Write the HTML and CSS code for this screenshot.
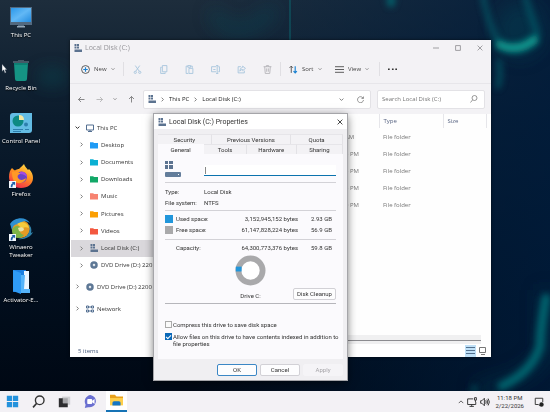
FILE: index.html
```html
<!DOCTYPE html>
<html lang="en">
<head>
<meta charset="utf-8">
<title>Desktop</title>
<link rel="stylesheet" href="styles.css">
</head>
<body>
<svg class="defs" aria-hidden="true">
  <symbol id="drive" viewBox="0 0 16 16"><path fill="#5c7390" d="M1 0h4v4H1zM6 0h4v4H6zM1 5h4v4H1zM6 5h4v4H6zM1 11h15v5H1z"/></symbol>
  <symbol id="folder" viewBox="0 0 16 14"><path fill="currentColor" d="M0 1h6l2 2h8v11H0z"/><path fill="#fff" opacity=".25" d="M0 1h6l2 2H0z"/></symbol>
  <symbol id="right" viewBox="0 0 8 8"><path class="line" d="M2.5 1 5.5 4l-3 3"/></symbol>
  <symbol id="down" viewBox="0 0 8 8"><path class="line" d="M1 2.5 4 5.5l3-3"/></symbol>
  <symbol id="disc" viewBox="0 0 16 16"><circle cx="8" cy="8" r="5" fill="none" stroke="#5d7795" stroke-width="5"/><circle cx="8" cy="8" r="1" fill="#5d7795"/></symbol>
  <symbol id="close" viewBox="0 0 10 10"><path class="line" d="m1 1 8 8M9 1 1 9"/></symbol>
  <symbol id="shortcut" viewBox="0 0 8 8"><path fill="#f4f8fc" d="M0 0h8v8H0z"/><path fill="#1d5fa8" d="M3 1h4v4L5.600 3.700C4.300 4.500 3.800 5.500 4 7H2C1.800 4.800 2.600 3.300 4.300 2.400z"/></symbol>
</svg>

<main class="desktop">
  <svg class="wallpaper" viewBox="0 0 550 391" preserveAspectRatio="none" aria-hidden="true">
    <defs>
      <linearGradient id="sky" x1="0" y1="0" x2="0" y2="1"><stop offset="0" stop-color="#1d2d3c"/><stop offset=".3" stop-color="#0b1c2d"/><stop offset=".65" stop-color="#021020"/><stop offset="1" stop-color="#000814"/></linearGradient>
      <linearGradient id="sea" x1="0" y1="0" x2="1" y2="0"><stop offset=".35" stop-color="#001f3f" stop-opacity="0"/><stop offset="1" stop-color="#001c3c" stop-opacity=".8"/></linearGradient>
      <filter id="soft" x="-50%" y="-50%" width="200%" height="200%"><feGaussianBlur stdDeviation="3"/></filter>
      <filter id="haze" x="-80%" y="-80%" width="260%" height="260%"><feGaussianBlur stdDeviation="9"/></filter>
    </defs>
    <path fill="url(#sky)" d="M0 0h550v391H0z"/>
    <path fill="url(#sea)" d="M0 0h550v391H0z"/>
    <g fill="none" filter="url(#haze)">
      <ellipse cx="52" cy="77" rx="14" ry="6" fill="#0a6a70" opacity=".45"/>
      <ellipse cx="520" cy="30" rx="24" ry="28" fill="#075a66" opacity=".25"/>
      <path stroke="#0b5c68" stroke-width="9" opacity=".4" d="M212 12q22 36 62-2"/>
      <path stroke="#03455a" stroke-width="12" opacity=".4" d="M545 290v60q-10 28-70 40"/>
    </g>
    <g fill="none" filter="url(#soft)" stroke-linecap="round">
      <path stroke="#0a7a80" stroke-width="6" opacity=".45" d="M483-4q6 32 16 46M525-4q6 20 12 38"/>
      <path stroke="#0ba497" stroke-width="9" opacity=".9" d="M500 45q18 8 34-5"/>
      <path stroke="#087278" stroke-width="8" opacity=".75" d="M391-2v5"/>
      <path stroke="#087278" stroke-width="6" opacity=".5" d="M499 62q2 16-1 24"/>
      <path stroke="#067f83" stroke-width="9" opacity=".7" d="M546 298q-6 32-6 48-8 26-38 40"/>
      <path stroke="#067f83" stroke-width="6" opacity=".4" d="M474 388v2"/>
    </g>
    <path stroke="#0a7f84" opacity=".7" d="M290 0v40"/>
  </svg>

  <nav class="shortcuts" aria-label="Desktop">
    <a class="shortcut" href="#"><svg viewBox="0 0 24 24"><defs><linearGradient id="pc" x1="0" y1="0" x2="1" y2="1"><stop offset="0" stop-color="#2b98ea"/><stop offset=".5" stop-color="#62b8f5"/><stop offset="1" stop-color="#238ce0"/></linearGradient></defs><path fill="#52697f" d="M1 2h22v18H1zM9 20h6v2H9z"/><path fill="url(#pc)" d="M2 3h20v14H2z"/><path fill="#94a7b7" d="M8 21h8v1.500H8z"/></svg>This PC</a>
    <a class="shortcut" href="#"><svg viewBox="0 0 24 24"><path fill="#159484" d="M5 5h14l-1 16q0 2-2 2H8q-2 0-2-2z"/><path fill="#0d7f73" d="M5 5h14v2H5z"/><path fill="#455966" d="M4 3h5V2h6v1h5v2H4z"/></svg>Recycle Bin</a>
    <a class="shortcut" href="#"><svg viewBox="0 0 24 24"><path fill="#63bce4" d="M4 2h19v17q0 3-3 3H1V5q0-3 3-3z"/><circle cx="9" cy="10" r="5.500" fill="#0d8a83"/><path fill="#f4e7a1" d="M10 9V4q5 0 5 5z"/><path stroke="#2d7fae" d="M4 18.500h10M16 18.500h4M4 20.500h8"/><circle cx="17" cy="13.500" r="2" fill="#2d7fae"/></svg>Control Panel</a>
    <a class="shortcut" href="#"><svg viewBox="0 0 24 24"><defs><linearGradient id="fox" x1=".8" y1="0" x2=".3" y2="1"><stop offset="0" stop-color="#ffe04a"/><stop offset=".45" stop-color="#ff9320"/><stop offset="1" stop-color="#f0284f"/></linearGradient></defs><path fill="url(#fox)" d="M3 4c1 1 2 2 3 2.500 1-1 3-1.500 4-1.500C12 3 14 1 15 0c1 3 3 4 4 6l1-1c3 3 4 6 4 9 0 6-5 10-12 10S0 19 0 13c0-4 1-7 3-9z"/><circle cx="12.500" cy="13" r="5.500" fill="#6a43c9"/><path fill="#ff9a26" d="M3 8c3-1 7 0 9 2-3 0-4 2-3 4 2 3 6 2 8 0-1 5-8 7-12 3-2-3-2-6-2-9z"/><path fill="#a34ce0" d="M11 8c3-1 7 1 7 5-2-2-4-3-7-3z"/><use href="#shortcut" x="0" y="17" width="7" height="7"/></svg>Firefox</a>
    <a class="shortcut" href="#"><svg viewBox="0 0 24 24"><circle cx="12" cy="12" r="9" fill="#e59b24"/><path fill="#2f8fd0" d="M1 7C5 0 17-1 21 6c-5-3-9-2-11 2-3-2-6 0-7 5-1-2-1-4-2-6z"/><path fill="#7db347" d="M3 13c2-4 5-5 8-3-1 4 0 7 4 8-2 3-7 4-9 2-2-1-3-4-3-7z"/><path fill="#f6cb3d" d="M8 7c5-4 11-1 12 4-3-1-5-1-7 1-1-2-3-3-5-5z"/><path fill="#e9e3a9" d="M9 11c2-1 5-1 6 1 0 2-3 3-5 2z"/><path fill="#3083ab" d="M24 15c-2 5-9 8-15 7 5-1 9-2 11-7 1-3 1-5-1-8 3 2 4 5 3 9z"/><use href="#shortcut" x="0" y="17" width="7" height="7"/></svg>Winaero<br>Tweaker</a>
    <a class="shortcut" href="#"><svg viewBox="0 0 24 24"><path fill="#1b7fe0" d="M4 0h13v22H4z"/><path fill="#eaf5ff" d="M15 1h5v19h-5z"/><path fill="#2f9bf5" d="M4 0 12 3v21l-8-3z"/><path fill="#55b4fa" d="M12 5h4l-1 14h6v4h-9z"/></svg>Activator-E...</a>
  </nav>

  <section class="explorer" aria-label="File Explorer">
    <header class="titlebar">
      <svg class="i8"><use href="#drive"/></svg><span class="name">Local Disk (C:)</span>
      <button aria-label="Minimize"><svg class="i6" viewBox="0 0 10 10"><path class="line" d="M0 5h10"/></svg></button>
      <button aria-label="Maximize"><svg class="i6" viewBox="0 0 10 10"><path class="line" d="M1 1h8v8H1z"/></svg></button>
      <button aria-label="Close"><svg class="i6"><use href="#close"/></svg></button>
    </header>
    <div class="toolbar">
      <button class="new"><svg class="i9" viewBox="0 0 16 16"><circle class="line" cx="8" cy="8" r="7"/><path stroke="#1a82d2" stroke-width="2" d="M8 4v8M4 8h8"/></svg>New<svg class="i4"><use href="#down"/></svg></button>
      <div class="tools">
        <button aria-label="Cut"><svg class="i9" viewBox="0 0 16 16"><path class="line" d="m4 1 7 10M12 1 5 11"/><circle class="line" cx="4" cy="13" r="2"/><circle class="line" cx="12" cy="13" r="2"/></svg></button>
        <button aria-label="Copy"><svg class="i9" viewBox="0 0 16 16"><path class="line" d="M6 1h8v11H6zM5 4H3v11h8v-2"/></svg></button>
        <button aria-label="Paste"><svg class="i9" viewBox="0 0 16 16"><path class="line" d="M5 2H2v13h4M5 1h5v3H5zM10 2h3v3M7 6h7v9H7z"/></svg></button>
        <button aria-label="Rename"><svg class="i9" viewBox="0 0 16 16"><path class="line" d="M9 3H1v9h8M13 3h2v9h-2M11 1v14M9 1h4M9 15h4M4 8h4"/></svg></button>
        <button aria-label="Share"><svg class="i9" viewBox="0 0 16 16"><path class="line" d="M7 3H2v11h11v-4M10 2l5 4-5 4V8q-4 0-5 3 0-6 5-7z"/></svg></button>
        <button class="gray" aria-label="Delete"><svg class="i9" viewBox="0 0 16 16"><path class="line" d="M1 3h14M6 3V1h4v2M3 3l1 12h8l1-12M6.500 6v6M9.500 6v6"/></svg></button>
      </div>
      <button class="sort"><svg class="i9" viewBox="0 0 16 16"><path class="line" d="M4 14V2M1 5l3-3 3 3"/><path fill="none" stroke="#1a82d2" stroke-width="2" d="M11 2v12M8 11l3 3 3-3"/></svg>Sort<svg class="i4"><use href="#down"/></svg></button>
      <button class="view"><svg class="i9" viewBox="0 0 16 16"><path class="line" d="M0 3h16M0 8h16M0 13h16"/></svg>View<svg class="i4"><use href="#down"/></svg></button>
      <button class="more" aria-label="See more"><svg class="i9" viewBox="0 0 16 16"><path fill="#333" d="M0 6h3v3H0zM7 6h3v3H7zM13 6h3v3h-3z"/></svg></button>
    </div>
    <div class="location">
      <div class="history">
        <button aria-label="Back"><svg class="i7" viewBox="0 0 14 14"><path class="line" d="M13 7H1M6 2 1 7l5 5"/></svg></button>
        <button class="dim" aria-label="Forward"><svg class="i7" viewBox="0 0 14 14"><path class="line" d="M1 7h12M8 2l5 5-5 5"/></svg></button>
        <button aria-label="Recent locations"><svg class="i4"><use href="#down"/></svg></button>
        <button aria-label="Up"><svg class="i7" viewBox="0 0 14 14"><path class="line" d="M7 13V1M2 6l5-5 5 5"/></svg></button>
      </div>
      <div class="address">
        <svg class="i8"><use href="#drive"/></svg>
        <svg class="i5"><use href="#right"/></svg><a href="#">This PC</a>
        <svg class="i5"><use href="#right"/></svg><a href="#">Local Disk (C:)</a>
        <button class="push" aria-label="Previous locations"><svg class="i5"><use href="#down"/></svg></button>
        <button aria-label="Refresh"><svg class="i7" viewBox="0 0 14 14"><path class="line" d="M12 4A6 6 0 1 0 13 8M13 1v4H9"/></svg></button>
      </div>
      <label class="search"><input type="search" placeholder="Search Local Disk (C:)" aria-label="Search Local Disk (C:)"><svg class="i8" viewBox="0 0 16 16"><circle class="line" cx="9" cy="6" r="5"/><path class="line" d="m5 10-4 5"/></svg></label>
    </div>
    <div class="content">
      <aside class="tree">
        <div class="rows">
          <a class="row root" href="#"><svg class="i5 open"><use href="#down"/></svg><svg class="i8" viewBox="0 0 16 16"><path fill="none" stroke="#536f91" stroke-width="2" d="M1 2h14v10H1zM4 15h8M8 12v3"/></svg>This PC</a>
          <a class="row" href="#"><svg class="i5"><use href="#right"/></svg><svg class="i8 blue"><use href="#folder"/></svg>Desktop</a>
          <a class="row" href="#"><svg class="i5"><use href="#right"/></svg><svg class="i8 cyan"><use href="#folder"/></svg>Documents</a>
          <a class="row" href="#"><svg class="i5"><use href="#right"/></svg><svg class="i8 green"><use href="#folder"/></svg>Downloads</a>
          <a class="row" href="#"><svg class="i5"><use href="#right"/></svg><svg class="i8 coral"><use href="#folder"/></svg>Music</a>
          <a class="row" href="#"><svg class="i5"><use href="#right"/></svg><svg class="i8 amber"><use href="#folder"/></svg>Pictures</a>
          <a class="row" href="#"><svg class="i5"><use href="#right"/></svg><svg class="i8 red"><use href="#folder"/></svg>Videos</a>
          <a class="row current" href="#"><svg class="i5"><use href="#right"/></svg><svg class="i8"><use href="#drive"/></svg>Local Disk (C:)</a>
          <a class="row" href="#"><svg class="i5"><use href="#right"/></svg><svg class="i8"><use href="#disc"/></svg>DVD Drive (D:) 220</a>
        </div>
        <a class="row root" href="#"><svg class="i5"><use href="#right"/></svg><svg class="i8"><use href="#disc"/></svg>DVD Drive (D:) 2200</a>
        <a class="row root" href="#"><svg class="i5"><use href="#right"/></svg><svg class="i8" viewBox="0 0 16 16"><path fill="none" stroke="#536f91" stroke-width="2" d="M1 2h4v4H1zM11 2h4v4h-4zM1 10h4v4H1zM11 10h4v4h-4zM5 4h6M5 12h6"/></svg>Network</a>
      </aside>
      <div class="files">
        <table>
          <thead><tr><th class="date" aria-label="Date"></th><th class="type">Type</th><th class="size">Size</th></tr></thead>
          <tbody>
            <tr><td class="date">AM</td><td>File folder</td><td></td></tr>
            <tr><td class="date">3 PM</td><td>File folder</td><td></td></tr>
            <tr><td class="date">3 PM</td><td>File folder</td><td></td></tr>
            <tr><td class="date">3 PM</td><td>File folder</td><td></td></tr>
            <tr><td class="date">0 PM</td><td>File folder</td><td></td></tr>
          </tbody>
        </table>
        <div class="scroll"></div>
      </div>
    </div>
    <footer class="status">
      <span class="name">5 items</span>
      <button class="on" aria-label="Details"><svg class="i9" viewBox="0 0 9 9"><path stroke="#53708d" d="M0 1.500h9M0 4.500h9M0 7.500h9"/></svg></button>
      <button aria-label="Large icons"><svg class="i9" viewBox="0 0 9 9"><path fill="none" stroke="#777" d="M1.500 1.500h6v5h-6zM3 8.500h4"/></svg></button>
    </footer>
  </section>

  <section class="dialog" role="dialog" aria-label="Local Disk (C:) Properties">
    <header class="titlebar">
      <svg class="i8"><use href="#drive"/></svg><h1 class="name">Local Disk (C:) Properties</h1>
      <button aria-label="Close"><svg class="i6"><use href="#close"/></svg></button>
    </header>
    <div class="tabs back" role="tablist">
      <button role="tab">Security</button><button role="tab">Previous Versions</button><button role="tab">Quota</button>
    </div>
    <div class="tabs front" role="tablist">
      <button role="tab" class="active" aria-selected="true">General</button><button role="tab">Tools</button><button role="tab">Hardware</button><button role="tab">Sharing</button>
    </div>
    <div class="panel">
      <div class="label-row">
        <svg class="big" viewBox="0 0 16 16"><path fill="#5c7390" d="M0 0h3v3H0zM4 0h4v3H4zM0 4h3v4H0zM4 4h4v4H4z"/><rect y="11" width="16" height="5" rx="1" fill="#637d9b"/><path fill="#fff" d="M13 13h1v1h-1z"/></svg>
        <div class="field"><i class="caret"></i><input type="text" aria-label="Volume label"></div>
      </div>
      <dl class="facts"><dt>Type:</dt><dd>Local Disk</dd><dt>File system:</dt><dd>NTFS</dd></dl>
      <div class="usage">
        <i class="swatch used"></i><span>Used space:</span><span class="num">3,152,945,152 bytes</span><span class="num">2.93 GB</span>
        <i class="swatch free"></i><span>Free space:</span><span class="num">61,147,828,224 bytes</span><span class="num">56.9 GB</span>
      </div>
      <div class="usage total"><i></i><span>Capacity:</span><span class="num">64,300,773,376 bytes</span><span class="num">59.8 GB</span></div>
      <svg class="donut" viewBox="0 0 32 32"><circle cx="16" cy="16" r="12.500" fill="#fff" stroke="#a9a9ab" stroke-width="6"/><path stroke="#2196db" stroke-width="5" d="M.8 14.500h6"/></svg>
      <div class="drive-row"><span>Drive C:</span><button class="btn">Disk Cleanup</button></div>
      <div class="options">
        <label><input type="checkbox"><span>Compress this drive to save disk space</span></label>
        <label><input type="checkbox" checked><span>Allow files on this drive to have contents indexed in addition to<br>file properties</span></label>
      </div>
    </div>
    <footer class="actions"><button class="btn primary">OK</button><button class="btn">Cancel</button><button class="btn" disabled>Apply</button></footer>
  </section>

  <svg class="pointer" viewBox="0 0 8 12" aria-hidden="true"><path fill="#fff" stroke="#234" stroke-width=".5" d="M1 0v9l2-2 1.500 4 1.500-1-1.500-3H7z"/></svg>
</main>

<footer class="taskbar">
  <button aria-label="Start"><svg class="i13" viewBox="0 0 16 16"><path fill="#2492dc" d="M1 1h6.500v6.500H1zM8.500 1H15v6.500H8.500zM1 8.500h6.500V15H1zM8.500 8.500H15V15H8.500z"/></svg></button>
  <button aria-label="Search"><svg class="i13" viewBox="0 0 16 16"><circle cx="9.500" cy="6.500" r="5.300" fill="none" stroke="#333" stroke-width="1.700"/><path stroke="#333" stroke-width="2" d="m5.800 10.200-4.500 5"/></svg></button>
  <button aria-label="Task view"><svg class="i13" viewBox="0 0 16 16"><path fill="#cfcfd2" d="M5 2h10v10H5z"/><path fill="#2d2d2f" d="M1 4h5v6h6v5H1z"/><path fill="#a5a5a8" d="M6 4h6v6H6z"/></svg></button>
  <button aria-label="Chat"><svg class="i13" viewBox="0 0 16 16"><path fill="#6a6fd0" d="M8 0a8 7.500 0 1 1-3 15l-4 1 1-4A8 8 0 0 1 8 0z"/><rect x="4" y="5" width="6" height="6" rx="1" fill="#fff"/><path fill="#fff" d="m10 7 3-2v6l-3-2z"/></svg></button>
  <button class="running" aria-label="File Explorer"><svg class="i13" viewBox="0 0 16 16"><path fill="#e9a21c" d="M0 1h6l2 2h8v5H0z"/><path fill="#ffcf4a" d="M0 5h16v9H0z"/><path fill="#1576c4" d="M3 14v-3q0-2 2-2h6q2 0 2 2v3z"/></svg></button>
  <div class="tray">
    <svg class="i6" viewBox="0 0 8 8"><path class="line thin" d="m1 5.500 3-3 3 3"/></svg>
    <svg class="i10" viewBox="0 0 16 16"><path class="line" d="M10 3H1v9h13V8M4 15h7M7.500 12v3M12 1h3v4h-3zM13.500 5v3"/></svg>
    <svg class="i10" viewBox="0 0 16 16"><path class="line" d="M1 6h2l4-4v12l-4-4H1zM9 5.500q2 2.500 0 5M11 4q3 4 0 8M13 2.500q4 5.500 0 11"/></svg>
    <time datetime="2026-02-22T23:18">11:18 PM<br>2/22/2026</time>
    <svg class="i10" viewBox="0 0 16 16"><path class="line" d="M14 8V2H2v10h5l2 2"/><circle cx="12" cy="12" r="3.500" fill="#222"/></svg>
  </div>
</footer>
</body>
</html>
```
FILE: styles.css
```css
* { box-sizing: border-box; }

body {
  margin: 0;
  height: 100vh;
  display: flex;
  flex-direction: column;
  overflow: hidden;
  background: #000814;
  color: #333;
  font: 6px/8px "Open Sans", "Noto Sans", sans-serif;
}

button, input { font: inherit; color: inherit; margin: 0; padding: 0; border: 0; background: none; }
a { color: inherit; text-decoration: none; }
svg { display: block; flex: none; }
.defs { position: absolute; width: 0; height: 0; }
.line { fill: none; stroke: currentColor; stroke-width: 1.5; }
.thin { stroke-width: 1; }

.i4 { width: 4px; height: 4px; }
.i5 { width: 5px; height: 5px; }
.i6 { width: 6px; height: 6px; }
.i7 { width: 7px; height: 7px; }
.i8 { width: 8px; height: 8px; }
.i9 { width: 9px; height: 9px; }
.i10 { width: 10px; height: 10px; }
.i13 { width: 13px; height: 13px; }
.i4, .i5 { color: #777; }

.desktop { position: relative; flex: 1; min-height: 0; }
.wallpaper { position: absolute; inset: 0; width: 100%; height: 100%; }

.shortcuts {
  position: relative;
  width: 42px;
  padding-top: 5px;
  display: grid;
  grid-auto-rows: 53px;
}
.shortcut {
  display: flex;
  flex-direction: column;
  align-items: center;
  gap: 2px;
  color: #fff;
  text-align: center;
  white-space: nowrap;
  text-shadow: 0 1px 1px #000;
}
.shortcut svg { width: 24px; height: 24px; }

.pointer { position: absolute; left: 1px; top: 64px; width: 7px; height: 10px; }

/* Explorer window */
.explorer {
  position: absolute;
  left: 70px;
  top: 40px;
  right: 59px;
  bottom: 34px;
  display: flex;
  flex-direction: column;
  background: #f3f2f5;
  box-shadow: 0 0 3px #0009;
}
.titlebar { display: flex; align-items: center; gap: 3px; height: 15px; padding: 0 4px; }
.titlebar .name { flex: 1; margin: 0; font-size: 7px; font-weight: normal; }
.titlebar button { width: 19px; display: grid; place-items: center; }
.explorer .titlebar { color: #96959a; padding-right: 2px; }

.toolbar {
  display: flex;
  align-items: center;
  height: 29px;
  padding-left: 11px;
  border-bottom: 1px solid #e7e6ea;
}
.toolbar button { display: flex; align-items: center; gap: 4px; height: 14px; color: #444; }
.toolbar .new { width: 43px; border-right: 1px solid #e0dfe3; }
.tools { display: flex; width: 157px; justify-content: space-around; border-right: 1px solid #e0dfe3; }
.toolbar .tools button { color: #a3c3dc; }
.toolbar .tools .gray { color: #b2b1b6; }
.toolbar .sort { width: 46px; margin-left: 8px; }
.toolbar .view { width: 45px; border-right: 1px solid #e0dfe3; }
.toolbar .more { margin-left: 8px; }

.location { display: flex; align-items: center; height: 30px; padding-right: 6px; }
.history { width: 73px; display: flex; justify-content: space-between; padding: 0 8px; color: #666; }
.history button { display: grid; place-items: center; }
.history .dim { color: #aaa; }
.address, .search {
  display: flex;
  align-items: center;
  height: 19px;
  background: #fff;
  border: 1px solid #e3e2e6;
  border-radius: 2px;
}
.address { flex: 1; gap: 4px; padding: 0 6px 0 4px; color: #222; }
.address button { color: #777; margin-left: 9px; }
.address .push { margin-left: auto; }
.search { width: 108px; margin-left: 6px; padding: 0 6px 0 4px; color: #777; }
.search input { flex: 1; min-width: 0; outline: 0; }
.search input::placeholder { color: #777; opacity: 1; }

.content { flex: 1; min-height: 0; display: flex; background: #fff; }
.tree { width: 84px; padding-top: 5px; }
.rows { display: grid; grid-auto-rows: 1fr; height: 155px; margin-bottom: 4px; }
.row {
  display: flex;
  align-items: center;
  gap: 3px;
  min-height: 17px;
  margin-left: 1px;
  padding-left: 8px;
  white-space: nowrap;
  color: #333;
}
.row .i5 + .i8 { margin-left: 3px; }
.row.root { padding-left: 4px; }
.rows + .root { margin-bottom: 5px; }
.row .open { color: #222; }
.current { background: #dad8dc; }
.blue { color: #1f9bf5; }
.cyan { color: #0bb0d3; }
.green { color: #12a868; }
.coral { color: #f78371; }
.amber { color: #fb9f04; }
.red { color: #f35840; }

.files { flex: 1; display: flex; flex-direction: column; justify-content: space-between; background: #fefefe; }
table { width: 333px; border-collapse: collapse; table-layout: fixed; color: #777; }
th, td { height: 17px; padding: 0 0 0 4px; text-align: left; font-weight: normal; }
th { height: 14px; color: #596583; border-right: 1px solid #e6e6ea; }
.date { width: 225px; }
td.date { padding-left: 191px; }
.type { width: 64px; }
.scroll { height: 9px; margin-right: 10px; background: linear-gradient(#f0f0f1 5px, #8c8c90 5px, #8c8c90 6px, #f0f0f1 6px); }

.status { display: flex; align-items: center; gap: 1px; height: 13px; padding: 0 3px 0 8px; background: #fff; color: #45597a; }
.status .name { flex: 1; }
.status button { width: 11px; height: 12px; display: grid; place-items: center; }
.status .on { background: #bfe0f7; }

/* Properties dialog */
.dialog {
  position: absolute;
  left: 154px;
  top: 114px;
  width: 193px;
  background: #f0eff2;
  color: #333;
  font: 6px/8px Roboto, "Liberation Sans", sans-serif;
  box-shadow: 0 0 0 1px #a5a5a9, 0 2px 9px #0009;
}
.dialog .titlebar { background: #fff; padding-right: 0; margin-bottom: 5px; }
.dialog .titlebar button { width: 15px; }
.tabs { display: flex; height: 10px; margin: 0 4px; }
.tabs button { background: #f3f2f5; border-top: 1px solid #e6e5e9; border-right: 1px solid #e3e2e6; line-height: 8px; }
.tabs.back button { width: 29%; }
.tabs.back button:nth-child(2) { width: 43%; }
.tabs.back button:last-child { flex: 1; }
.tabs.front button { width: 25%; }
.tabs.front button:nth-child(2) { width: 23%; }
.tabs.front button:nth-child(3) { width: 27%; }
.tabs .active { background: #fbfafd; border-color: #fbfafd; }
.panel { margin: 0 4px 5px; padding: 7px; background: #fbfafd; }
.label-row { display: flex; justify-content: space-between; padding-bottom: 5px; border-bottom: 1px solid #d3d2d7; }
.big { width: 16px; height: 16px; }
.field { display: flex; align-items: center; width: 132px; height: 11px; margin-top: 4px; background: #fff; border-bottom: 1px solid #0c73ae; padding-left: 1px; }
.field input { flex: 1; min-width: 0; outline: 0; }
.caret { width: 1px; height: 7px; background: #888; }
.facts { display: grid; grid-template-columns: 39px 1fr; row-gap: 3px; margin: 0; padding: 5px 0 3px; border-bottom: 1px solid #d3d2d7; }
.facts dd { margin: 0; }
.usage { display: grid; grid-template-columns: 8px 36px 1fr 31px; column-gap: 3px; row-gap: 3px; padding: 4px 4px 5px 0; border-bottom: 1px solid #d3d2d7; white-space: nowrap; }
.usage .num { text-align: right; }
.usage.total { border: 0; padding-bottom: 3px; }
.used { background: #2196db; }
.free { background: #a9a9ab; }
.donut { width: 31px; height: 31px; margin: 0 auto 2px; }
.drive-row { display: grid; grid-template-columns: 1fr auto 1fr; align-items: end; padding-bottom: 3px; border-bottom: 1px solid #b6b6bb; }
.drive-row span { grid-column: 2; }
.btn { height: 12px; background: #fdfdfe; border: 1px solid #d2d1d6; border-radius: 2px; line-height: 8px; white-space: nowrap; }
.drive-row .btn { justify-self: end; width: 43px; }
.options { display: grid; gap: 5px; padding: 17px 0 5px; line-height: 7px; white-space: nowrap; }
.options label { display: flex; gap: 1px; }
.options input { appearance: none; flex: none; display: grid; place-items: center; width: 7px; height: 7px; border: 1px solid #aaa; background: #fafafa; }
.options input:checked { border-color: #0a68b8; background: #0a68b8; }
.options input:checked::before {
  content: "";
  width: 4px;
  height: 2px;
  border: solid #fff;
  border-width: 0 0 1px 1px;
  transform: rotate(-45deg);
}
.actions { display: grid; grid-template-columns: repeat(3, 40px); justify-content: end; gap: 3px; padding: 0 4px 4px; }
.actions .primary { border-color: #3b87c5; }
.actions .btn:disabled { color: #a5a4a8; border-color: #f5f4f7; background: #f5f4f7; }

/* Taskbar */
.taskbar { display: flex; align-items: center; gap: 5px; height: 21px; padding: 0 6px 0 2px; background: #f3f1f5; position: relative; }
.taskbar button { width: 21px; height: 21px; display: grid; place-items: center; }
.taskbar .running { background: #fff; border-bottom: 2px solid #1673b5; }
.tray { display: flex; align-items: center; gap: 3px; margin-left: auto; color: #333; font-family: Roboto, sans-serif; }
.tray time { text-align: center; margin: 0 7px 0 2px; }
```
